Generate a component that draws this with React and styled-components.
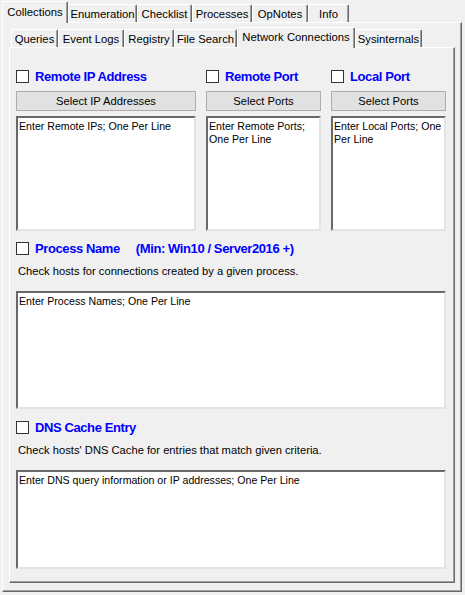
import React from 'react';
import styled, { createGlobalStyle } from 'styled-components';

const Global = createGlobalStyle`
  html, body { margin: 0; padding: 0; background: #f0f0f0; }
  body { font-family: "Liberation Sans", Arial, sans-serif; font-size: 11.2px; color: #000; }
  * { box-sizing: border-box; }
`;

const Window = styled.div`
  width: 465px;
  height: 595px;
  padding: 0 0 0 2px;
  background: #f0f0f0;
  overflow: hidden;
`;

const TabStrip = styled.div`
  display: flex;
  align-items: flex-end;
  height: ${p => p.$h}px;
  padding-left: ${p => p.$pl || 0}px;
  position: relative;
  z-index: 2;
`;

const Tab = styled.div`
  width: ${p => p.$w}px;
  height: ${p => (p.$active ? p.$h + p.$lift + 1 : p.$h)}px;
  margin-bottom: ${p => (p.$active ? -1 : 0)}px;
  background: #f0f0f0;
  border-top: 1px solid #ffffff;
  border-left: 1px solid #ffffff;
  border-right: 1px solid #696969;
  box-shadow: inset -1px 0 0 #a0a0a0;
  border-radius: 2px 2px 0 0;
  display: flex;
  align-items: center;
  justify-content: center;
  padding-bottom: ${p => (p.$active ? 2 : 0)}px;
  font-size: 11.3px;
  white-space: nowrap;
  position: relative;
  z-index: ${p => (p.$active ? 2 : 1)};
`;

const OuterPage = styled.div`
  width: 460px;
  height: 570px;
  border-top: 1px solid #ffffff;
  border-left: 1px solid #ffffff;
  border-right: 1px solid #696969;
  border-bottom: 1px solid #696969;
  box-shadow: inset -1px -1px 0 #a0a0a0;
  padding: 4px 6px 0 6px;
  position: relative;
  z-index: 1;
`;

const InnerPage = styled.div`
  width: 446px;
  height: 536px;
  border-top: 1px solid #ffffff;
  border-left: 1px solid #ffffff;
  border-right: 1px solid #696969;
  border-bottom: 1px solid #696969;
  box-shadow: inset -1px -1px 0 #a0a0a0;
  padding: 22px 0 0 6px;
  display: flex;
  flex-direction: column;
`;

const Columns = styled.div`
  display: grid;
  grid-template-columns: 180px 115px 115px;
  column-gap: 10px;
`;

const Column = styled.div`
  display: flex;
  flex-direction: column;
`;

const CheckRow = styled.label`
  display: flex;
  align-items: center;
  height: 13px;
  gap: 6px;
  margin-top: ${p => p.$mt || 0}px;
`;

const Box = styled.span`
  width: 13px;
  height: 13px;
  flex: none;
  background: #ffffff;
  border: 1px solid #333333;
`;

const Title = styled.span`
  font-weight: bold;
  font-size: 13px;
  letter-spacing: -0.4px;
  color: #0000ff;
  white-space: nowrap;
  margin-left: ${p => p.$ml || 0}px;
`;

const Button = styled.div`
  height: 20px;
  margin-top: 8px;
  background: #e1e1e1;
  border: 1px solid #adadad;
  display: flex;
  align-items: center;
  justify-content: center;
  font-size: 11.2px;
`;

const TextBox = styled.textarea`
  display: block;
  width: ${p => p.$w || 'auto'};
  height: ${p => p.$h}px;
  margin-top: ${p => p.$mt}px;
  resize: none;
  overflow: hidden;
  background: #ffffff;
  color: #000;
  font-family: "Liberation Sans", Arial, sans-serif;
  font-size: 10.6px;
  line-height: 13px;
  padding: 2px 1px;
  border-style: solid;
  border-width: 2px;
  border-color: #696969 #e3e3e3 #e3e3e3 #696969;
  outline: none;
`;

const Desc = styled.div`
  margin: ${p => p.$mt}px 0 0 2px;
  line-height: 14px;
  font-size: 11.2px;
`;

const Wide = styled.div`
  width: 430px;
`;

const outerTabs = [
  ['Collections', 66],
  ['Enumeration', 69],
  ['Checklist', 55],
  ['Processes', 60],
  ['OpNotes', 56],
  ['Info', 41],
];

const innerTabs = [
  ['Queries', 47],
  ['Event Logs', 66],
  ['Registry', 50],
  ['File Search', 63],
  ['Network Connections', 118],
  ['Sysinternals', 67],
];

function Check({ title, extra, mt, ml }) {
  return (
    <CheckRow $mt={mt}>
      <Box />
      <Title>{title}</Title>
      {extra && <Title $ml={ml}>{extra}</Title>}
    </CheckRow>
  );
}

export default function App() {
  return (
    <>
      <Global />
      <Window>
        <TabStrip $h={22}>
          {outerTabs.map(([t, w], i) => (
            <Tab key={t} $w={w} $h={18} $lift={3} $active={i === 0}>{t}</Tab>
          ))}
        </TabStrip>
        <OuterPage>
          <TabStrip $h={20} $pl={2}>
            {innerTabs.map(([t, w], i) => (
              <Tab key={t} $w={w} $h={18} $lift={2} $active={i === 4}>{t}</Tab>
            ))}
          </TabStrip>
          <InnerPage>
            <Columns>
              <Column>
                <Check title="Remote IP Address" />
                <Button>Select IP Addresses</Button>
                <TextBox $h={115} $mt={5} defaultValue="Enter Remote IPs; One Per Line" />
              </Column>
              <Column>
                <Check title="Remote Port" />
                <Button>Select Ports</Button>
                <TextBox $h={115} $mt={5} defaultValue="Enter Remote Ports; One Per Line" />
              </Column>
              <Column>
                <Check title="Local Port" />
                <Button>Select Ports</Button>
                <TextBox $h={115} $mt={5} defaultValue="Enter Local Ports; One Per Line" />
              </Column>
            </Columns>
            <Wide>
              <Check title="Process Name" extra="(Min: Win10 / Server2016 +)" ml={10} mt={11} />
              <Desc $mt={9}>Check hosts for connections created by a given process.</Desc>
              <TextBox $w="430px" $h={118} $mt={13} defaultValue="Enter Process Names; One Per Line" />
              <Check title="DNS Cache Entry" mt={12} />
              <Desc $mt={9}>Check hosts' DNS Cache for entries that match given criteria.</Desc>
              <TextBox $w="430px" $h={99} $mt={13} defaultValue="Enter DNS query information or IP addresses; One Per Line" />
            </Wide>
          </InnerPage>
        </OuterPage>
      </Window>
    </>
  );
}
